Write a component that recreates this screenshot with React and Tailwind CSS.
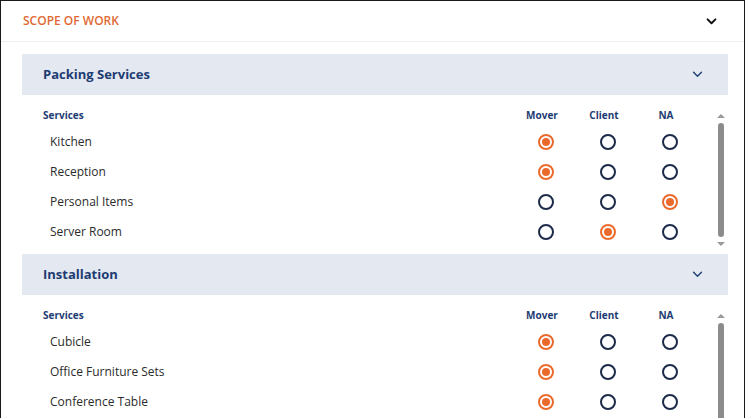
import React from "react";

const sections = [
  {
    title: "Packing Services",
    rows: [
      ["Kitchen", 0],
      ["Reception", 0],
      ["Personal Items", 2],
      ["Server Room", 1],
    ],
  },
  {
    title: "Installation",
    rows: [
      ["Cubicle", 0],
      ["Office Furniture Sets", 0],
      ["Conference Table", 0],
    ],
  },
];

function Radio({ checked }) {
  return checked ? (
    <span className="flex h-[16px] w-[16px] items-center justify-center rounded-full border-2 border-[#ea6a2c] bg-white">
      <span className="h-[8px] w-[8px] rounded-full bg-[#ea6a2c]" />
    </span>
  ) : (
    <span className="h-[16px] w-[16px] rounded-full border-2 border-[#1c2b4a] bg-white" />
  );
}

function Chevron({ className }) {
  return (
    <svg viewBox="0 0 12 8" className={className} fill="none" stroke="currentColor">
      <path d="M1.5 1.5 6 6l4.5-4.5" strokeLinecap="round" strokeLinejoin="round" />
    </svg>
  );
}

function Section({ s }) {
  return (
    <div className="flex h-[200px] flex-col">
      <div className="flex h-[41px] items-center justify-between bg-[#e4e9f1] pl-[21px] pr-[25px]">
        <span className="text-[13px] font-bold text-[#1d3c72]">{s.title}</span>
        <Chevron className="h-[7px] w-[11px] stroke-[1.6] text-[#1d3c72]" />
      </div>
      <div className="mt-[9px] flex h-[146px] overflow-hidden">
        <div className="flex-1 pl-[21px]">
          <div className="flex h-[23px] items-center text-[10px] font-bold text-[#1d3c72]">
            <span className="flex-1">Services</span>
            <span className="w-[62px] text-center">Mover</span>
            <span className="w-[62px] text-center">Client</span>
            <span className="w-[62px] text-center">NA</span>
            <span className="w-[7px]" />
          </div>
          {s.rows.map(([name, sel]) => (
            <div key={name} className="flex h-[30px] items-center text-[12px] text-[#2b2b2b]">
              <span className="flex-1 pl-[7px]">{name}</span>
              {[0, 1, 2].map((i) => (
                <span key={i} className="flex w-[62px] justify-center pl-[7px]">
                  <Radio checked={sel === i} />
                </span>
              ))}
              <span className="w-[7px]" />
            </div>
          ))}
        </div>
        <div className="relative w-[24px]">
          <span className="absolute left-[13px] top-[10px] h-0 w-0 border-x-[4px] border-b-[4px] border-x-transparent border-b-[#9a9a9a]" />
          <span className="absolute left-[14px] top-[19px] h-[114px] w-[6px] rounded-full bg-[#8c8c8c]" />
          <span className="absolute left-[13px] top-[138px] h-0 w-0 border-x-[4px] border-t-[4px] border-x-transparent border-t-[#9a9a9a]" />
        </div>
      </div>
    </div>
  );
}

export default function App() {
  return (
    <div
      className="h-[418px] w-[745px] overflow-hidden border-x border-t border-[#1a1a1a] bg-white"
      style={{ fontFamily: '"Open Sans", "Liberation Sans", sans-serif' }}
    >
      <div className="flex h-[41px] items-center justify-between border-b border-[#eeeeee] pl-[22px] pr-[27px]">
        <span className="text-[12px] font-semibold uppercase text-[#e06a34]">Scope of Work</span>
        <Chevron className="h-[7px] w-[11px] stroke-[2.2] text-[#111]" />
      </div>
      <div className="pl-[21px] pr-[16px] pt-[12px]">
        {sections.map((s) => (
          <Section key={s.title} s={s} />
        ))}
      </div>
    </div>
  );
}
